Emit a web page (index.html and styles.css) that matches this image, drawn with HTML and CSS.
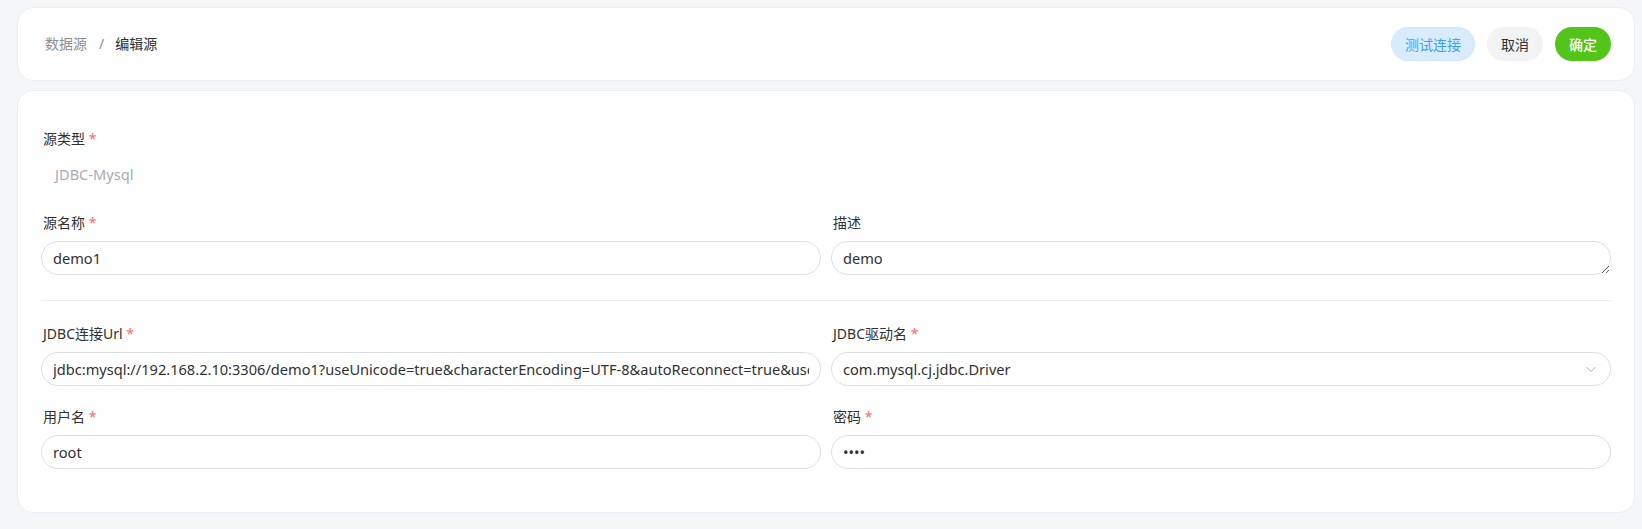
FILE: index.html
```html
<!DOCTYPE html>
<html lang="zh-CN">
<head>
<meta charset="utf-8">
<title>编辑源</title>
<link rel="stylesheet" href="styles.css">
</head>
<body>
<div class="page">
  <header class="card header">
    <nav class="breadcrumb">
      <span class="crumb">数据源</span>
      <span class="sep">/</span>
      <span class="crumb current">编辑源</span>
    </nav>
    <div class="actions">
      <button class="btn btn-test">测试连接</button>
      <button class="btn btn-cancel">取消</button>
      <button class="btn btn-ok">确定</button>
    </div>
  </header>
  <main class="card body">
    <div class="form">
      <div class="field">
        <label class="label">源类型 <span class="req">*</span></label>
        <div class="static">JDBC-Mysql</div>
      </div>
      <div class="grid2 first">
        <div class="field">
          <label class="label">源名称 <span class="req">*</span></label>
          <input class="input" type="text" value="demo1">
        </div>
        <div class="field">
          <label class="label">描述</label>
          <textarea class="input textarea">demo</textarea>
        </div>
      </div>
      <div class="divider"></div>
      <div class="grid2">
        <div class="field">
          <label class="label">JDBC连接Url <span class="req">*</span></label>
          <input class="input" type="text" value="jdbc:mysql://192.168.2.10:3306/demo1?useUnicode=true&amp;characterEncoding=UTF-8&amp;autoReconnect=true&amp;useSSL=false">
        </div>
        <div class="field">
          <label class="label">JDBC驱动名 <span class="req">*</span></label>
          <div class="input select">
            <span>com.mysql.cj.jdbc.Driver</span>
            <svg class="chev" width="12" height="12" viewBox="0 0 12 12"><path d="M1.5 4 L6 8.5 L10.5 4" fill="none" stroke="#a8abb2" stroke-width="1"/></svg>
          </div>
        </div>
        <div class="field">
          <label class="label">用户名 <span class="req">*</span></label>
          <input class="input" type="text" value="root">
        </div>
        <div class="field">
          <label class="label">密码 <span class="req">*</span></label>
          <input class="input" type="password" value="1234">
        </div>
      </div>
    </div>
  </main>
</div>
</body>
</html>
```

FILE: styles.css
```css
* { box-sizing: border-box; }
html, body { margin: 0; background: #f5f6f8; }
body {
  font-family: "Noto Sans", "Noto Sans CJK SC", sans-serif;
  font-size: 14px;
  color: #303133;
}
.page {
  padding: 7px 7px 16px 17px;
  display: flex;
  flex-direction: column;
  gap: 9px;
}
.card {
  background: #fff;
  border: 1px solid #ebeef5;
  border-radius: 16px;
}
.header {
  height: 74px;
  display: flex;
  align-items: center;
  justify-content: space-between;
  padding: 0 23px 0 27px;
}
.breadcrumb {
  display: flex;
  align-items: center;
  font-size: 14px;
  line-height: 22px;
}
.crumb { color: #8a8f99; }
.crumb.current { color: #303133; }
.sep { color: #8a8f99; margin: 0 11px 0 12px; }
.actions { display: flex; gap: 12px; }
.btn {
  height: 34px;
  border-radius: 17px;
  border: 1px solid transparent;
  font-family: inherit;
  font-size: 14px;
  padding: 0;
  white-space: nowrap;
  cursor: pointer;
}
.btn-test { background: #d9ecff; border-color: #d2e7fd; color: #409eff; width: 84px; }
.btn-cancel { background: #f2f3f5; color: #303133; width: 56px; }
.btn-ok { background: #52c41a; color: #fff; width: 56px; font-weight: 500; }

.body { padding: 37px 23px 43px; }
.form { display: flex; flex-direction: column; }
.field { display: flex; flex-direction: column; min-width: 0; }
.label {
  line-height: 22px;
  margin: 0 0 7px 2px;
  color: #303133;
}
.req { color: #f56c6c; }
.static {
  height: 34px;
  line-height: 34px;
  padding-left: 14px;
  color: #a8abb2;
  font-size: 14.6px;
}
.grid2 {
  display: grid;
  grid-template-columns: 1fr 1fr;
  column-gap: 10px;
  row-gap: 20px;
}
.grid2.first { margin-top: 21px; }
.divider {
  height: 1px;
  background: #ebeef5;
  margin: 25px 0 22px;
}
.input {
  height: 34px;
  width: 100%;
  border: 1px solid #dcdfe6;
  border-radius: 17px;
  padding: 0 11px;
  font-family: inherit;
  font-size: 14.6px;
  color: #303133;
  background: #fff;
  outline: none;
}
.textarea {
  display: block;
  line-height: 22px;
  padding: 5px 11px;
  resize: vertical;
  overflow: hidden;
}
.select {
  display: flex;
  align-items: center;
  justify-content: space-between;
  padding-right: 13px;
}
.chev { flex: none; }
```
